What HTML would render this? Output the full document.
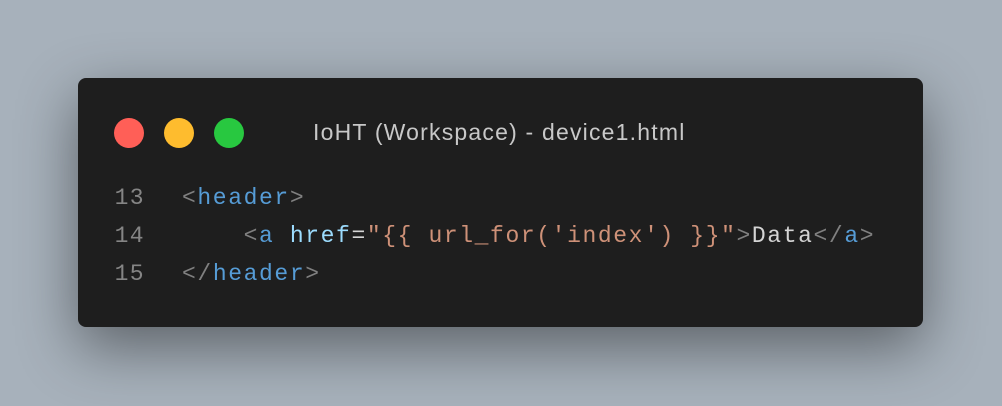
<!DOCTYPE html>
<html><head><style>
html,body{margin:0;padding:0;}
body{width:1002px;height:406px;background:#a7b1bb;position:relative;overflow:hidden;}
.win{position:absolute;left:78px;top:78px;width:845px;height:249px;background:#1e1e1e;border-radius:8px;box-shadow:0 20px 60px rgba(0,0,0,0.45);}
.dot{position:absolute;top:40px;width:30px;height:30px;border-radius:50%;}
.title{position:absolute;left:235px;top:39px;font:23px "Liberation Sans",sans-serif;letter-spacing:1.2px;color:#c8c8c8;line-height:30px;}
.code{position:absolute;left:0;top:101px;font:23px "Liberation Mono",monospace;letter-spacing:1.6px;line-height:38px;white-space:pre;color:#d4d4d4;}
.ln{display:inline-block;width:67px;margin-right:37px;text-align:right;color:#858585;letter-spacing:1.4px;}
.g{color:#808080}.t{color:#569cd6}.at{color:#9cdcfe}.s{color:#ce9178}
</style></head><body>
<div class="win">
<div class="dot" style="left:36px;background:#ff5f57"></div>
<div class="dot" style="left:86px;background:#febc2e"></div>
<div class="dot" style="left:136px;background:#28c840"></div>
<div class="title">IoHT (Workspace) - device1.html</div>
<div class="code"><span class="ln">13</span><span class="g">&lt;</span><span class="t">header</span><span class="g">&gt;</span>
<span class="ln">14</span>    <span class="g">&lt;</span><span class="t">a</span> <span class="at">href</span>=<span class="s">"{{ url_for('index') }}"</span><span class="g">&gt;</span>Data<span class="g">&lt;/</span><span class="t">a</span><span class="g">&gt;</span>
<span class="ln">15</span><span class="g">&lt;/</span><span class="t">header</span><span class="g">&gt;</span></div>
</div>
</body></html>
